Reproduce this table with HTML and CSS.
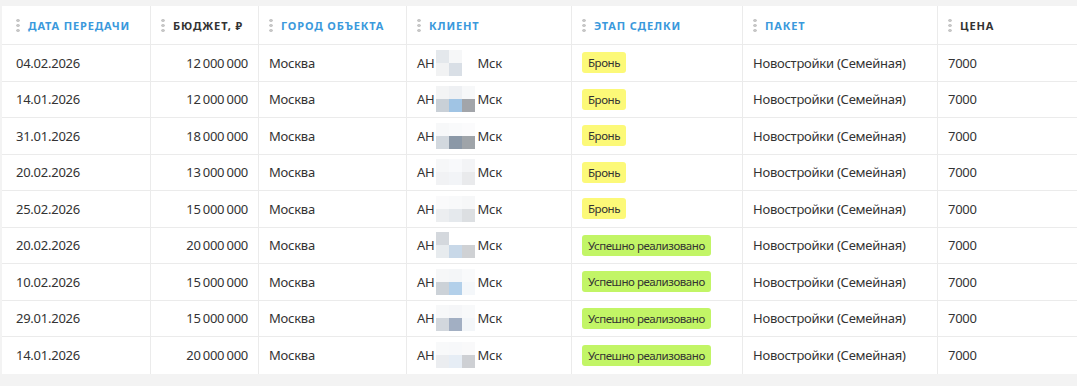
FILE: index.html
```html
<!DOCTYPE html>
<html lang="ru">
<head>
<meta charset="utf-8">
<title>Сделки</title>
<link rel="stylesheet" href="styles.css">
</head>
<body>
<div class="table">
  <div class="row head">
    <div class="cell first"><span class="grip"></span><span class="h link">Дата передачи</span></div>
    <div class="cell"><span class="grip"></span><span class="h">Бюджет, ₽</span></div>
    <div class="cell"><span class="grip"></span><span class="h link">Город объекта</span></div>
    <div class="cell"><span class="grip"></span><span class="h link">Клиент</span></div>
    <div class="cell"><span class="grip"></span><span class="h link">Этап сделки</span></div>
    <div class="cell"><span class="grip"></span><span class="h link">Пакет</span></div>
    <div class="cell"><span class="grip"></span><span class="h">Цена</span></div>
  </div>

  <div class="row">
    <div class="cell first">04.02.2026</div>
    <div class="cell num">12 000 000</div>
    <div class="cell">Москва</div>
    <div class="cell">АН<span class="blur"><i style="background:#e4e8ec"></i><i style="background:#f6f7f8"></i><i style="background:#fff"></i><i style="background:#f1f2f3"></i><i style="background:#d9dfe6"></i><i style="background:#fff"></i></span>Мск</div>
    <div class="cell"><span class="badge yellow">Бронь</span></div>
    <div class="cell">Новостройки (Семейная)</div>
    <div class="cell">7000</div>
  </div>

  <div class="row">
    <div class="cell first">14.01.2026</div>
    <div class="cell num">12 000 000</div>
    <div class="cell">Москва</div>
    <div class="cell">АН<span class="blur"><i style="background:#f3f4f5"></i><i style="background:#eef0f3"></i><i style="background:#f7f8f9"></i><i style="background:#c9d0d7"></i><i style="background:#a0c4e4"></i><i style="background:#a2a5aa"></i></span>Мск</div>
    <div class="cell"><span class="badge yellow">Бронь</span></div>
    <div class="cell">Новостройки (Семейная)</div>
    <div class="cell">7000</div>
  </div>

  <div class="row">
    <div class="cell first">31.01.2026</div>
    <div class="cell num">18 000 000</div>
    <div class="cell">Москва</div>
    <div class="cell">АН<span class="blur"><i style="background:#f7f8f9"></i><i style="background:#f9fafb"></i><i style="background:#fbfbfc"></i><i style="background:#d2d8de"></i><i style="background:#8b98a7"></i><i style="background:#9fa4a9"></i></span>Мск</div>
    <div class="cell"><span class="badge yellow">Бронь</span></div>
    <div class="cell">Новостройки (Семейная)</div>
    <div class="cell">7000</div>
  </div>

  <div class="row">
    <div class="cell first">20.02.2026</div>
    <div class="cell num">13 000 000</div>
    <div class="cell">Москва</div>
    <div class="cell">АН<span class="blur"><i style="background:#f6f7f8"></i><i style="background:#f8f9fb"></i><i style="background:#f3f4f6"></i><i style="background:#f1f2f4"></i><i style="background:#f2f4f7"></i><i style="background:#e9eaec"></i></span>Мск</div>
    <div class="cell"><span class="badge yellow">Бронь</span></div>
    <div class="cell">Новостройки (Семейная)</div>
    <div class="cell">7000</div>
  </div>

  <div class="row">
    <div class="cell first">25.02.2026</div>
    <div class="cell num">15 000 000</div>
    <div class="cell">Москва</div>
    <div class="cell">АН<span class="blur"><i style="background:#fafafb"></i><i style="background:#f8f9fa"></i><i style="background:#f6f7f8"></i><i style="background:#eceef0"></i><i style="background:#e5e9ed"></i><i style="background:#dcdfe2"></i></span>Мск</div>
    <div class="cell"><span class="badge yellow">Бронь</span></div>
    <div class="cell">Новостройки (Семейная)</div>
    <div class="cell">7000</div>
  </div>

  <div class="row">
    <div class="cell first">20.02.2026</div>
    <div class="cell num">20 000 000</div>
    <div class="cell">Москва</div>
    <div class="cell">АН<span class="blur"><i style="background:#d4d8dd"></i><i style="background:#fff"></i><i style="background:#fff"></i><i style="background:#e7ebee"></i><i style="background:#c8d8e8"></i><i style="background:#cfd1d4"></i></span>Мск</div>
    <div class="cell"><span class="badge green">Успешно реализовано</span></div>
    <div class="cell">Новостройки (Семейная)</div>
    <div class="cell">7000</div>
  </div>

  <div class="row">
    <div class="cell first">10.02.2026</div>
    <div class="cell num">15 000 000</div>
    <div class="cell">Москва</div>
    <div class="cell">АН<span class="blur"><i style="background:#f6f7f8"></i><i style="background:#f4f6f8"></i><i style="background:#f9fafb"></i><i style="background:#ccd2d8"></i><i style="background:#b3d0ea"></i><i style="background:#f4f7fa"></i></span>Мск</div>
    <div class="cell"><span class="badge green">Успешно реализовано</span></div>
    <div class="cell">Новостройки (Семейная)</div>
    <div class="cell">7000</div>
  </div>

  <div class="row">
    <div class="cell first">29.01.2026</div>
    <div class="cell num">15 000 000</div>
    <div class="cell">Москва</div>
    <div class="cell">АН<span class="blur"><i style="background:#f7f8f9"></i><i style="background:#f5f6f8"></i><i style="background:#f8f9fa"></i><i style="background:#d2d7dd"></i><i style="background:#a2afc3"></i><i style="background:#f3f6f9"></i></span>Мск</div>
    <div class="cell"><span class="badge green">Успешно реализовано</span></div>
    <div class="cell">Новостройки (Семейная)</div>
    <div class="cell">7000</div>
  </div>

  <div class="row">
    <div class="cell first">14.01.2026</div>
    <div class="cell num">20 000 000</div>
    <div class="cell">Москва</div>
    <div class="cell">АН<span class="blur"><i style="background:#f8f9fa"></i><i style="background:#f7f8fa"></i><i style="background:#f9f9fa"></i><i style="background:#ebedf0"></i><i style="background:#e6edf5"></i><i style="background:#ced0d4"></i></span>Мск</div>
    <div class="cell"><span class="badge green">Успешно реализовано</span></div>
    <div class="cell">Новостройки (Семейная)</div>
    <div class="cell">7000</div>
  </div>
</div>
</body>
</html>
```

FILE: styles.css
```css
html, body {
  margin: 0;
  padding: 0;
  background: #f3f3f3;
}

body {
  padding: 6px 0 0 2px;
  font-family: "Noto Sans", "Open Sans", sans-serif;
  font-size: 13px;
  color: #333;
}

.table {
  background: #fff;
  width: 1075px;
}

.row {
  display: grid;
  grid-template-columns: 148px 108px 148px 165px 171px 195px 140px;
  height: 36.5px;
  box-sizing: border-box;
  border-bottom: 1px solid #ebebeb;
}

.row:last-child {
  border-bottom: none;
}

.row.head {
  height: 39px;
}

.cell {
  display: flex;
  align-items: center;
  padding: 0 10px;
  border-left: 1px solid #ebebeb;
  white-space: nowrap;
  letter-spacing: -0.25px;
}

.cell.first {
  border-left: none;
  padding-left: 14px;
}

.cell.num {
  justify-content: flex-end;
  word-spacing: -1px;
}

.grip {
  width: 4px;
  height: 14px;
  margin-right: 8px;
  background: radial-gradient(circle, #c8c8c8 1.6px, transparent 1.9px) 0 0 / 4px 5px repeat-y;
  flex: none;
}

.h {
  font-size: 11px;
  font-weight: 700;
  letter-spacing: 0.85px;
  text-transform: uppercase;
  color: #333;
}

.h.link {
  color: #3a99dc;
}

.blur {
  display: inline-grid;
  grid-template-columns: repeat(3, 13px);
  grid-template-rows: 13px 13px;
  margin: 0 2px 0 2px;
}

.blur i {
  display: block;
}

.badge {
  display: inline-flex;
  align-items: center;
  height: 21px;
  padding: 0 6px;
  border-radius: 3px;
  font-size: 11.5px;
  letter-spacing: -0.45px;
  color: #333;
}

.badge.yellow {
  background: #fcf978;
}

.badge.green {
  background: #c2f566;
}
```
